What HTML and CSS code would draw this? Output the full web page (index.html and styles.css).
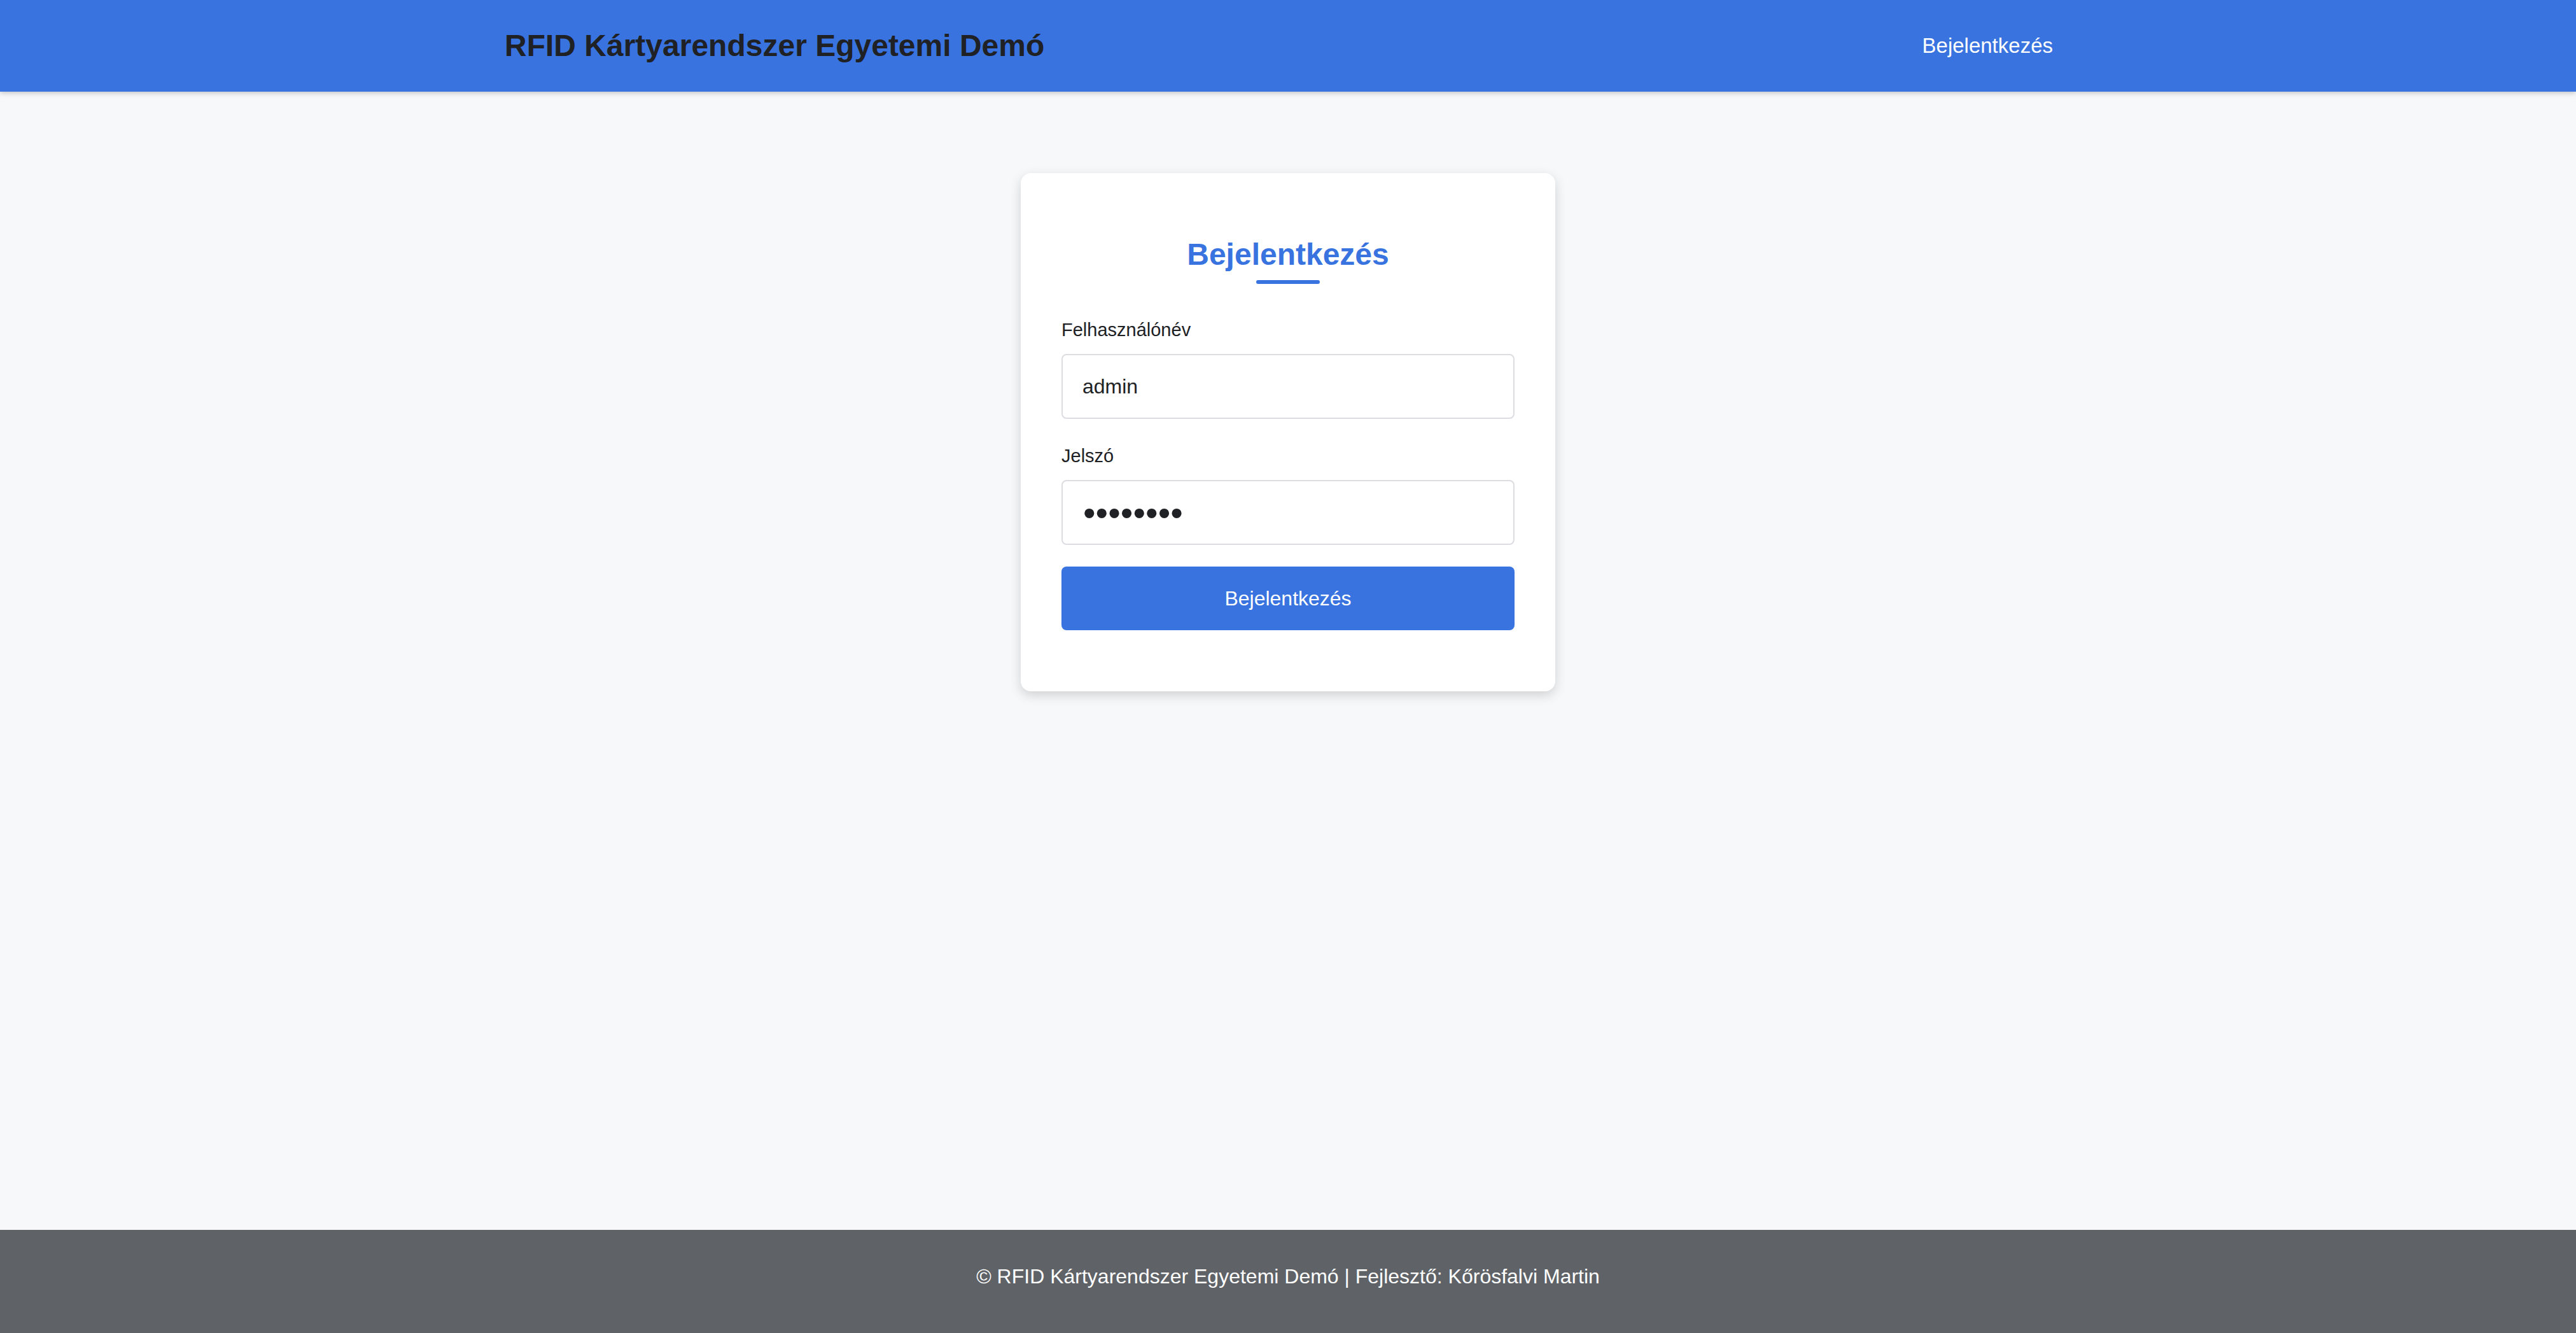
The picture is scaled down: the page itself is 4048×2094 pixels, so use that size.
FILE: index.html
```html
<!DOCTYPE html>
<html lang="hu">
<head>
<meta charset="utf-8">
<title>RFID Kártyarendszer Egyetemi Demó</title>
<link rel="stylesheet" href="styles.css">
</head>
<body>
<header class="topbar">
  <div class="topbar-inner">
    <div class="brand">RFID Kártyarendszer Egyetemi Demó</div>
    <nav class="nav"><a class="nav-link" href="#">Bejelentkezés</a></nav>
  </div>
</header>
<main class="content">
  <section class="card">
    <h2 class="card-title">Bejelentkezés</h2>
    <div class="title-rule"></div>
    <form class="login-form">
      <div class="field field-user">
        <label class="field-label" for="username">Felhasználónév</label>
        <input class="field-input" id="username" type="text" value="admin">
      </div>
      <div class="field field-pass">
        <label class="field-label" for="password">Jelszó</label>
        <input class="field-input field-password" id="password" type="password" value="password">
      </div>
      <button class="submit-btn" type="button">Bejelentkezés</button>
    </form>
  </section>
</main>
<footer class="footer">© RFID Kártyarendszer Egyetemi Demó | Fejlesztő: Kőrösfalvi Martin</footer>
</body>
</html>
```
FILE: styles.css
```css
html, body {
  margin: 0;
  padding: 0;
}
body {
  background: #f7f8fa;
  font-family: "Liberation Sans", Arial, sans-serif;
  color: #202124;
  min-height: 100vh;
  display: flex;
  flex-direction: column;
}
.topbar {
  height: 144px;
  background: #3873e0;
  box-shadow: 0 2px 8px rgba(0, 0, 0, 0.22);
  position: relative;
  z-index: 2;
  flex-shrink: 0;
}
.topbar-inner {
  width: 2468px;
  margin: 0 auto;
  height: 100%;
  display: flex;
  align-items: center;
  justify-content: space-between;
}
.brand {
  font-size: 48px;
  font-weight: 700;
  color: #202124;
  line-height: 56px;
  padding-left: 3px;
}
.nav-link {
  display: block;
  font-size: 33px;
  color: #ffffff;
  text-decoration: none;
  padding: 16px 32px;
  line-height: 40px;
}
.content {
  flex: 1;
  display: flex;
  justify-content: center;
  align-items: flex-start;
  padding-top: 128px;
}
.card {
  width: 840px;
  box-sizing: border-box;
  padding: 64px;
  background: #ffffff;
  border-radius: 16px;
  box-shadow: 0 6px 18px rgba(0, 0, 0, 0.16);
}
.card-title {
  margin: 36px 0 0;
  text-align: center;
  font-size: 48px;
  line-height: 56px;
  font-weight: 700;
  color: #3873e0;
}
.title-rule {
  width: 100px;
  height: 6px;
  border-radius: 3px;
  background: #3873e0;
  margin: 12px auto 0;
}
.login-form {
  margin-top: 52px;
}
.field-user {
  margin-bottom: 38px;
}
.field-pass {
  margin-bottom: 34px;
}
.field-label {
  display: block;
  font-size: 29px;
  line-height: 40px;
  color: #202124;
  margin-bottom: 18px;
}
.field-input {
  display: block;
  width: 100%;
  height: 102px;
  box-sizing: border-box;
  border: 2px solid #dcdde1;
  border-radius: 8px;
  padding: 0 31px;
  font-family: "Liberation Sans", Arial, sans-serif;
  font-size: 32px;
  color: #202124;
  background: #ffffff;
  outline: none;
}
.field-password {
  font-size: 56px;
  padding: 0 32px;
}
.submit-btn {
  display: block;
  width: 100%;
  height: 100px;
  border: none;
  border-radius: 8px;
  background: #3873e0;
  color: #ffffff;
  font-family: "Liberation Sans", Arial, sans-serif;
  font-size: 32px;
  margin-bottom: 32px;
  cursor: pointer;
}
.footer {
  height: 162px;
  box-sizing: border-box;
  padding-top: 48px;
  line-height: 51px;
  background: #5f6368;
  color: #ffffff;
  font-size: 32px;
  text-align: center;
  flex-shrink: 0;
}
```
